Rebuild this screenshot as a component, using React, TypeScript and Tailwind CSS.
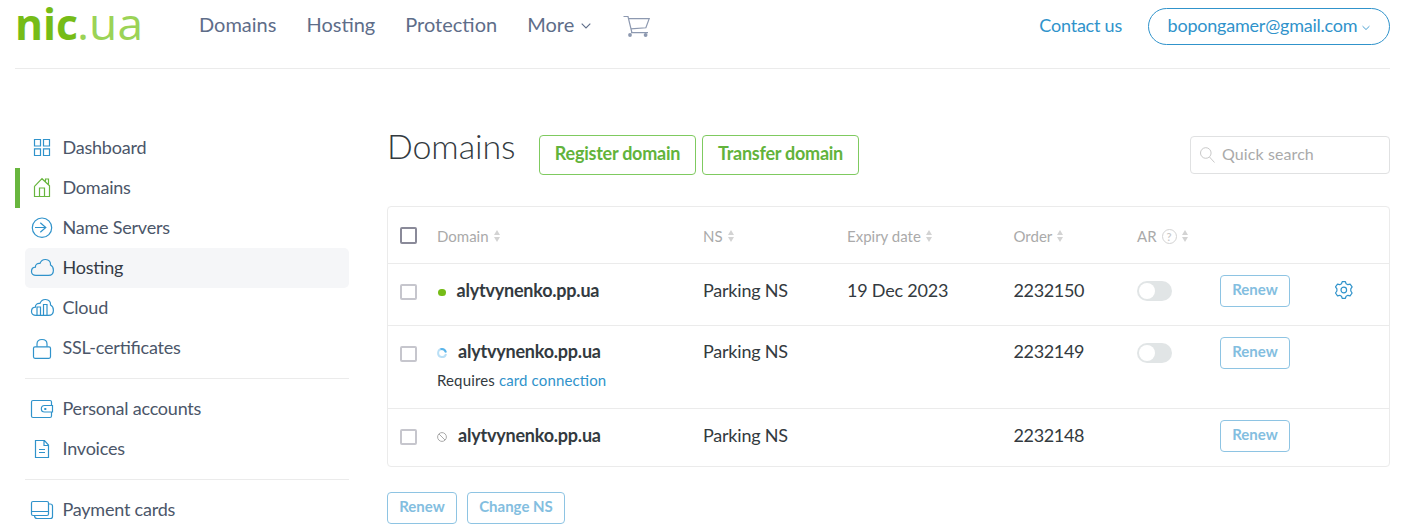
import type { ReactNode } from "react";

const Icon = ({ children, className = "" }: { children: ReactNode; className?: string }) => (
  <svg width="24" height="24" viewBox="0 0 24 24" fill="none" stroke="currentColor" strokeWidth="1.2" className={`shrink-0 overflow-visible ${className}`}>
    {children}
  </svg>
);

const cloudPath = "M6 19.400C3 19.400 1.500 17.800 1.500 15.500C1.500 13 3.200 11.300 5.400 11.200C5.300 8.500 7.400 6.900 10 7.400C11 4.600 13.200 3.400 15.600 3.500C19 3.600 20.900 6 20.500 9C22.400 10 23.400 12 23.400 14.200C23.400 17.500 21.500 19.400 18.500 19.400Z";

const icons = {
  dashboard: (
    <path d="M4.500 3.500h6v6.500h-6zM13.500 3.500h6v6.500h-6zM4.500 12.900h6v6.600h-6zM13.500 12.900h6v6.600h-6z" />
  ),
  domains: <path d="M4.500 10.300v10.200h15V9.800L12 2.700L4.500 10.300M9.500 20.500v-8.500h5v8.500M15.500 6V3h3v5.600" />,
  servers: (
    <>
      <circle cx="12" cy="11.700" r="9.700" />
      <path d="M5 11.500h10.800M10.300 6.700l5.500 4.800-5.500 4.800" />
    </>
  ),
  hosting: <path d={cloudPath} />,
  cloud: (
    <>
      <path d={cloudPath} />
      <path d="M7 19.300v-8.300h3.500v8.300M13.500 19.300V8.500h3.500v10.800" />
    </>
  ),
  ssl: (
    <>
      <rect x="3.500" y="10.800" width="17" height="11.500" rx="1.500" />
      <path d="M7 10.800V8c0-2.800 1.800-4.500 5-4.500S17 5.200 17 8v2.800" />
    </>
  ),
  wallet: (
    <>
      <path d="M21.500 8V5c0-1-.7-1.500-1.500-1.500H3c-1 0-1.500.5-1.500 1.500v14c0 1 .5 1.500 1.500 1.500h17c1 0 1.500-.5 1.500-1.500v-4" />
      <path d="M22.500 8.500h-8c-4.200 0-4.200 6.500 0 6.500h8z" />
      <rect x="14.300" y="11" width="2" height="2" fill="currentColor" stroke="none" />
    </>
  ),
  invoices: <path d="M5.500 3.500h9l4 4.500v12.500h-13zM14 3.500V8.500h4.500M9 12.500h6M9 15.500h6" />,
  cards: (
    <>
      <rect x="1.500" y="3.500" width="17" height="14" rx="1.500" />
      <path d="M1.500 13.500h17M18.500 6h1.500c1.500 0 2.500.8 2.500 2v10.500c0 1.300-.8 2-2 2H7c-1.500 0-2.500-.8-2.500-3" />
    </>
  ),
};

const Item = ({ icon, label, active, hover }: { icon: keyof typeof icons; label: string; active?: boolean; hover?: boolean }) => (
  <a
    className={`flex h-10 items-center border-l-[5px] ${active ? "border-[#68b63e]" : "border-transparent"}`}
  >
    <span className={`ml-[5px] flex h-10 w-[324px] items-center gap-[9px] rounded-[5px] pl-[5px] text-[18px] tracking-[-0.22px] ${hover ? "bg-[#f5f6f8] text-[#333a45]" : "text-[#4b5669]"}`}>
      <Icon className={active ? "text-[#68b63e]" : "text-[#3093cb]"}>{icons[icon]}</Icon>
      <span className="-ml-[0.5px] pb-[2px]">{label}</span>
    </span>
  </a>
);

const Sort = () => (
  <svg width="6" height="12" viewBox="0 0 6 12" fill="#d3d3d3">
    <path d="M3 0l3 5H0zM3 12L0 7h6z" />
  </svg>
);

const Head = ({ label, help }: { label: string; help?: boolean }) => (
  <div className="flex h-full items-center gap-[5px] pt-[2px] text-[15px] text-[#aaaaaa]">
    <span>{label}</span>
    {help && (
      <span className="flex size-[15px] items-center justify-center rounded-full border border-[#d3d3d3] text-[11px] font-semibold leading-none text-[#c8c8c8]">?</span>
    )}
    <Sort />
  </div>
);

const Chevron = ({ className = "" }: { className?: string }) => (
  <svg width="10" height="6" viewBox="0 0 10 6" fill="none" stroke="currentColor" strokeWidth="1.100" className={className}>
    <path d="M.7.7L5 4.900 9.300.7" />
  </svg>
);

const SmallButton = ({ children, className = "" }: { children: ReactNode; className?: string }) => (
  <button className={`flex h-8 items-center justify-center rounded-[4px] border border-[#8ec4e3] pb-[3px] text-[15px] font-bold leading-[22.5px] text-[#83bee0] ${className}`}>
    {children}
  </button>
);

const Toggle = () => (
  <div className="mt-[17px] h-5 w-[35px] rounded-full bg-[#e1e5e6] p-[2px]">
    <div className="size-4 rounded-full bg-white" />
  </div>
);

const grid = "grid grid-cols-[49px_266px_144px_166.5px_123.5px_83px_115px_1fr]";

type RowProps = { height: string; pad: string; status: ReactNode; note?: ReactNode; expiry?: string; order: string; toggle?: boolean; gear?: boolean };

const Row = ({ height, pad, status, note, expiry, order, toggle, gear }: RowProps) => (
  <div className={`${grid} ${height} border-t border-[#ebebeb] text-[18px] leading-6 tracking-[-0.22px] text-[#333a40]`}>
    <div className="pl-3 pt-5">
      <div className="h-4 w-[17px] rounded-[2px] border-2 border-[#c6c6cd]" />
    </div>
    <div className={pad}>
      <div className="flex items-center font-bold">
        {status}
        <span>alytvynenko.pp.ua</span>
      </div>
      {note}
    </div>
    <div className={pad}>Parking NS</div>
    <div className={pad}>{expiry}</div>
    <div className={`${pad} tracking-[-0.35px]`}>{order}</div>
    <div>{toggle && <Toggle />}</div>
    <div className="pt-[11px] tracking-normal">
      <SmallButton className="w-[70px]">Renew</SmallButton>
    </div>
    <div className="pt-[17px]">
      {gear && (
        <svg width="18" height="18" viewBox="0 0 18 18" fill="none" stroke="#3093cb" strokeWidth="1.200" strokeLinejoin="round">
          <path d="M7.200.700h3.200l.7 2 1.800 1 2.200-.5 2 2.700-1.300 2V10l1.300 2-2 2.800-2.200-.5-1.800 1-.7 2H7.200l-.7-2-1.800-1-2.200.5-2-2.800 1.400-2V7.900l-1.400-2 2-2.700 2.200.5 1.800-1z" />
          <circle cx="8.800" cy="9" r="2.800" />
        </svg>
      )}
    </div>
  </div>
);

export default function App() {
  return (
    <div className="h-[524px] w-[1415px] overflow-hidden bg-white font-['Lato',sans-serif] [font-feature-settings:'liga'_1]">
      <header className="ml-[15px] flex h-[69px] w-[1375px] items-start border-b border-[#ebebeb]">
        <svg width="130" height="50" viewBox="0 0 130 50" className="shrink-0 font-['Open_Sans',sans-serif]">
          <text x="0" y="39.800" fontSize="43" fontWeight="700" fill="#76bc17" textLength="63" lengthAdjust="spacingAndGlyphs">nic</text>
          <text x="62" y="39.800" fontSize="43" fontWeight="400" fill="#9bd356" textLength="66" lengthAdjust="spacingAndGlyphs">.ua</text>
        </svg>
        <nav className="ml-[54px] flex h-12 items-center gap-[30px] text-[20px] text-[#5e6d89]">
          <a>Domains</a>
          <a>Hosting</a>
          <a>Protection</a>
          <a className="flex items-center gap-[7px]">More<Chevron className="mt-1" /></a>
          <svg width="28" height="24" viewBox="0 0 28 24" fill="none" stroke="#8d99b0" strokeWidth="1.200" className="ml-[2px] mt-[6px]">
            <path d="M.5 1.500h4.500L9 18M5.500 3.600h20.700l-3.300 9.200L7.800 13.800M8 17.700h17" />
            <circle cx="7" cy="20" r="1.900" fill="#8d99b0" stroke="none" />
            <circle cx="22.600" cy="20" r="1.900" fill="#8d99b0" stroke="none" />
          </svg>
        </nav>
        <div className="ml-auto flex items-start text-[18px] tracking-[-0.22px] text-[#3093cb]">
          <a className="mt-[11px] leading-7">Contact us</a>
          <button className="ml-[26px] mt-2 flex h-[37px] w-[242px] items-center justify-center gap-[5px] rounded-full border border-[#3093cb] pb-[2px]">
            <span>bopongamer@gmail.com</span>
            <Chevron className="mt-1 w-2" />
          </button>
        </div>
      </header>
      <div className="flex">
        <aside className="ml-[15px] w-[334px] shrink-0 pt-[59px]">
          <Item icon="dashboard" label="Dashboard" />
          <Item icon="domains" label="Domains" active />
          <Item icon="servers" label="Name Servers" />
          <Item icon="hosting" label="Hosting" hover />
          <Item icon="cloud" label="Cloud" />
          <Item icon="ssl" label="SSL-certificates" />
          <hr className="my-[10px] ml-[10px] border-[#ebebeb]" />
          <Item icon="wallet" label="Personal accounts" />
          <Item icon="invoices" label="Invoices" />
          <hr className="my-[10px] ml-[10px] border-[#ebebeb]" />
          <Item icon="cards" label="Payment cards" />
        </aside>
        <main className="ml-[38px] w-[1003px] pt-[66px]">
          <div className="flex h-[71px] items-start">
            <h1 className="-mt-[11px] w-[152px] text-[34px] font-light leading-[44px] tracking-[-0.1px] text-[#333a40]">Domains</h1>
            <button className="h-10 w-[157px] rounded-[4px] border border-[#7fca60] pb-[3px] text-[18px] font-bold tracking-[-0.25px] text-[#62b33b]">Register domain</button>
            <button className="ml-[6px] h-10 w-[157px] rounded-[4px] border border-[#7fca60] pb-[3px] text-[18px] font-bold tracking-[-0.25px] text-[#62b33b]">Transfer domain</button>
            <label className="ml-auto mt-px flex h-[38px] w-[200px] items-center gap-[7px] rounded-[4px] border border-[#e0e1e2] pl-[9px] text-[16px] tracking-[0.1px] text-[#aaaaaa]">
              <svg width="15" height="16" viewBox="0 0 15 16" fill="none" stroke="#c9c9c9">
                <circle cx="5.800" cy="6" r="5.300" />
                <path d="M9.500 10l5 5.500" />
              </svg>
              <span className="pb-[2px]">Quick search</span>
            </label>
          </div>
          <section className="rounded-[4px] border border-[#ebebeb]">
            <div className={`${grid} h-14`}>
              <div className="pl-3 pt-5">
                <div className="size-[17px] rounded-[2px] border-2 border-[#8a8a99]" />
              </div>
              <Head label="Domain" />
              <Head label="NS" />
              <Head label="Expiry date" />
              <Head label="Order" />
              <Head label="AR" help />
            </div>
            <Row
              height="h-[62px]"
              pad="pt-[14px]"
              status={<span className="ml-px mr-[10.500px] mt-[4px] h-[7px] w-2 rounded-full bg-[#76bc17]" />}
              expiry="19 Dec 2023"
              order="2232150"
              toggle
              gear
            />
            <Row
              height="h-[83px]"
              pad="pt-[13px]"
              status={
                <svg width="10" height="10" viewBox="0 0 10 10" fill="none" strokeWidth="2" className="mr-[11px] mt-1">
                  <path d="M5 1a4 4 0 1 0 4 5" stroke="#b9dff6" />
                  <path d="M3.500 1.300Q7.500 .200 9 4.500" stroke="#58b4ea" />
                </svg>
              }
              note={<div className="mt-[5px] text-[15px] tracking-[0.14px]">Requires <a className="text-[#3093cb]">card connection</a></div>}
              order="2232149"
              toggle
            />
            <Row
              height="h-[58px]"
              pad="pt-[14px]"
              status={
                <svg width="10" height="10" viewBox="0 0 10 10" fill="none" stroke="#aaaaaa" className="mr-[11px] mt-[4px]">
                  <circle cx="5" cy="5" r="4.400" />
                  <path d="M2 2l6 6" />
                </svg>
              }
              order="2232148"
            />
          </section>
          <div className="mt-[25px] flex gap-[10px]">
            <SmallButton className="w-[70px]">Renew</SmallButton>
            <SmallButton className="w-[98px]">Change NS</SmallButton>
          </div>
        </main>
      </div>
    </div>
  );
}
